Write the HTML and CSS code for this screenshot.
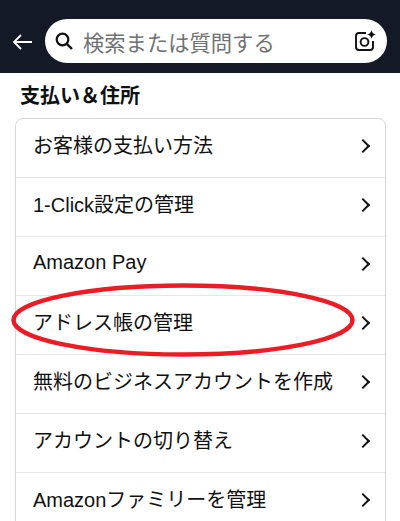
FILE: index.html
```html
<!doctype html>
<html lang="ja">
<head>
<meta charset="utf-8">
<title>支払い&住所</title>
<link rel="stylesheet" href="styles.css">
</head>
<body>
<div class="top_bar">
	<svg class="back" width="22" height="18" viewBox="0 0 22 18"><path d="M21 9H3M10 2 3 9l7 7" fill="none" stroke="#fff" stroke-width="1.800"/></svg>
	<div class="search">
		<svg class="glass" width="20" height="20" viewBox="0 0 20 20"><circle cx="8.500" cy="8.500" r="5.800" fill="none" stroke="#111" stroke-width="2.200"/><path d="M12.800 12.800 18 18" stroke="#111" stroke-width="2.400"/></svg>
		<span class="hint">検索または質問する</span>
		<svg class="lens" width="22" height="22" viewBox="0 0 22 22"><path d="M12 3H5Q2 3 2 6v11q0 3 3 3h11q3 0 3-3v-6" fill="none" stroke="#111" stroke-width="1.900"/><circle cx="10.500" cy="12" r="3.900" fill="none" stroke="#111" stroke-width="1.900"/><path d="M17.500 0q.6 3.900 4.500 4.500-3.900.6-4.500 4.500-.6-3.900-4.500-4.500 3.900-.6 4.500-4.500z" fill="#111"/></svg>
	</div>
</div>
<h2 class="title">支払い＆住所</h2>
<div class="list">
	<div class="row"><span class="label">お客様の支払い方法</span><i class="arrow"></i></div>
	<div class="row"><span class="label">1-Click設定の管理</span><i class="arrow"></i></div>
	<div class="row"><span class="label">Amazon Pay</span><i class="arrow"></i></div>
	<div class="row"><span class="label">アドレス帳の管理</span><i class="arrow"></i></div>
	<div class="row"><span class="label">無料のビジネスアカウントを作成</span><i class="arrow"></i></div>
	<div class="row"><span class="label">アカウントの切り替え</span><i class="arrow"></i></div>
	<div class="row"><span class="label">Amazonファミリーを管理</span><i class="arrow"></i></div>
</div>
<svg class="mark" width="346" height="74" viewBox="0 0 346 74"><ellipse cx="173" cy="37" rx="169.500" ry="34.500" fill="none" stroke="#ed1c24" stroke-width="4.500"/></svg>
</body>
</html>
```
FILE: styles.css
```css
*{margin:0; padding:0; box-sizing:border-box;}
html,body{height:521px; overflow:hidden;}
body{background:#fff; color:#111; font-family:"Liberation Sans","Noto Sans CJK JP",sans-serif; position:relative;}
.top_bar{height:73px; background:#131a26; display:flex; align-items:flex-end; padding:0 13px 10px 11px;}
.back{flex:none; margin:0 12px 12px 0; display:block;}
.search{flex:1; height:44px; background:#fff; border-radius:22px; display:flex; align-items:center; padding:0 11px 0 9px;}
.glass{flex:none; margin-right:9px;}
.hint{flex:1; font-size:21.300px; color:#6f7373;}
.lens{flex:none;}
.title{font-size:20px; font-weight:bold; line-height:26px; padding:10px 0 0 20px; color:#0f1111;}
.list{margin:9px 14px 0 15px; border:1px solid #d5d9d9; border-radius:8px;}
.row{height:59px; display:flex; align-items:center; justify-content:space-between; padding:0 13px 6px 17px; border-top:1px solid #e7e7e7; font-size:20px;}
.row:first-child{border-top:0; height:58px;}
.label{padding-bottom:2px;}
.arrow{width:10px; height:10px; border-top:2px solid #111; border-right:2px solid #111; transform:rotate(45deg); margin:2px 4px 0 0;}
.mark{position:absolute; left:10px; top:283px;}
```
